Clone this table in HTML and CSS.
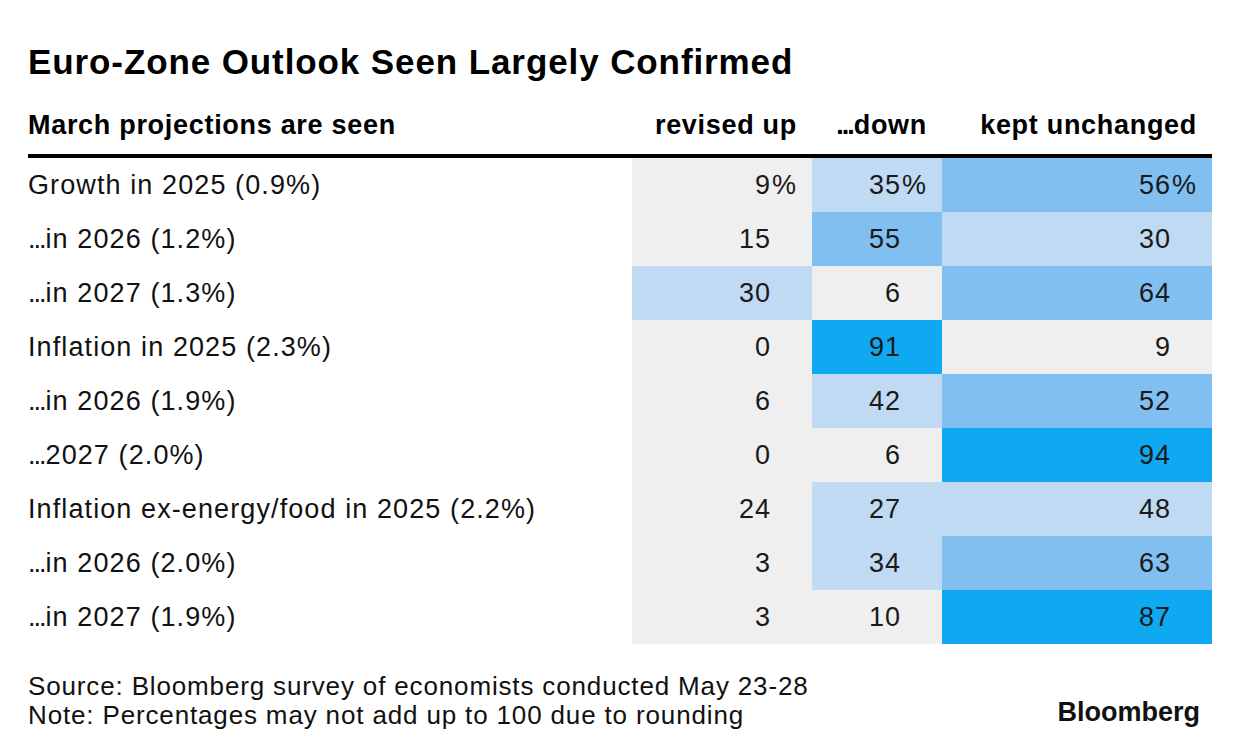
FILE: index.html
```html
<!DOCTYPE html>
<html>
<head>
<meta charset="utf-8">
<link rel="stylesheet" href="styles.css">
</head>
<body>
<div class="chart">
  <h1 class="title">Euro-Zone Outlook Seen Largely Confirmed</h1>
  <div class="table">
    <div class="row head">
      <div class="label">March projections are seen</div>
      <div class="cell">revised up</div>
      <div class="cell"><span class="dots">...</span>down</div>
      <div class="cell">kept unchanged</div>
    </div>
    <div class="row">
      <div class="label">Growth in 2025 (0.9%)</div>
      <div class="cell grey"><span>9</span><span class="pct">%</span></div>
      <div class="cell light"><span>35</span><span class="pct">%</span></div>
      <div class="cell mid"><span>56</span><span class="pct">%</span></div>
    </div>
    <div class="row">
      <div class="label"><span class="dots">...</span>in 2026 (1.2%)</div>
      <div class="cell grey"><span>15</span><span class="pct"></span></div>
      <div class="cell mid"><span>55</span><span class="pct"></span></div>
      <div class="cell light"><span>30</span><span class="pct"></span></div>
    </div>
    <div class="row">
      <div class="label"><span class="dots">...</span>in 2027 (1.3%)</div>
      <div class="cell light"><span>30</span><span class="pct"></span></div>
      <div class="cell grey"><span>6</span><span class="pct"></span></div>
      <div class="cell mid"><span>64</span><span class="pct"></span></div>
    </div>
    <div class="row">
      <div class="label">Inflation in 2025 (2.3%)</div>
      <div class="cell grey"><span>0</span><span class="pct"></span></div>
      <div class="cell bright"><span>91</span><span class="pct"></span></div>
      <div class="cell grey"><span>9</span><span class="pct"></span></div>
    </div>
    <div class="row">
      <div class="label"><span class="dots">...</span>in 2026 (1.9%)</div>
      <div class="cell grey"><span>6</span><span class="pct"></span></div>
      <div class="cell light"><span>42</span><span class="pct"></span></div>
      <div class="cell mid"><span>52</span><span class="pct"></span></div>
    </div>
    <div class="row">
      <div class="label"><span class="dots">...</span>2027 (2.0%)</div>
      <div class="cell grey"><span>0</span><span class="pct"></span></div>
      <div class="cell grey"><span>6</span><span class="pct"></span></div>
      <div class="cell bright"><span>94</span><span class="pct"></span></div>
    </div>
    <div class="row">
      <div class="label">Inflation ex-energy/food in 2025 (2.2%)</div>
      <div class="cell grey"><span>24</span><span class="pct"></span></div>
      <div class="cell light"><span>27</span><span class="pct"></span></div>
      <div class="cell light"><span>48</span><span class="pct"></span></div>
    </div>
    <div class="row">
      <div class="label"><span class="dots">...</span>in 2026 (2.0%)</div>
      <div class="cell grey"><span>3</span><span class="pct"></span></div>
      <div class="cell light"><span>34</span><span class="pct"></span></div>
      <div class="cell mid"><span>63</span><span class="pct"></span></div>
    </div>
    <div class="row">
      <div class="label"><span class="dots">...</span>in 2027 (1.9%)</div>
      <div class="cell grey"><span>3</span><span class="pct"></span></div>
      <div class="cell grey"><span>10</span><span class="pct"></span></div>
      <div class="cell bright"><span>87</span><span class="pct"></span></div>
    </div>
  </div>
  <div class="footer">
    <div class="notes">
      <div>Source: Bloomberg survey of economists conducted May 23-28</div>
      <div>Note: Percentages may not add up to 100 due to rounding</div>
    </div>
    <div class="logo">Bloomberg</div>
  </div>
</div>
</body>
</html>
```

FILE: styles.css
```css
html, body {
  margin: 0;
  padding: 0;
  background: #fff;
}
body {
  font-family: "Liberation Sans", Arial, sans-serif;
  color: #111;
}
.chart {
  width: 1184px;
  padding: 40px 28px 0 28px;
}
.title {
  margin: 0;
  font-size: 35px;
  line-height: 44px;
  font-weight: 700;
  color: #000;
  letter-spacing: 0.9px;
}
.table {
  margin-top: 16px;
}
.row {
  display: grid;
  grid-template-columns: 604px 180px 130px 270px;
  height: 54px;
  align-items: stretch;
}
.row.head {
  height: 50px;
  padding-bottom: 4px;
  border-bottom: 4px solid #000;
  font-weight: 700;
  color: #000;
}
.label {
  display: flex;
  align-items: center;
  font-size: 27px;
  letter-spacing: 1.1px;
  color: #111;
  white-space: pre;
}
.row.head .label {
  font-size: 27px;
  letter-spacing: 0.7px;
  color: #000;
}
.dots {
  letter-spacing: -2px;
  margin-right: 1px;
}
.cell {
  display: flex;
  align-items: center;
  justify-content: flex-end;
  padding-right: 15px;
  font-size: 27px;
  letter-spacing: 1px;
  color: #1a1a1a;
}
.row.head .cell {
  font-size: 27px;
  letter-spacing: 0.7px;
  color: #000;
  padding-right: 15px;
}
.pct {
  display: inline-block;
  width: 26px;
  text-align: right;
}
.grey { background: #efefef; }
.light { background: #bfdaf2; }
.mid { background: #80bff0; }
.bright { background: #0ea9f0; }
.footer {
  display: flex;
  justify-content: space-between;
  align-items: flex-end;
  margin-top: 28px;
}
.notes {
  font-size: 26px;
  line-height: 29px;
  letter-spacing: 0.85px;
  color: #111;
}
.logo {
  font-size: 27px;
  font-weight: 700;
  color: #111;
  padding-right: 12px;
  padding-bottom: 2px;
  letter-spacing: 0;
}
```
